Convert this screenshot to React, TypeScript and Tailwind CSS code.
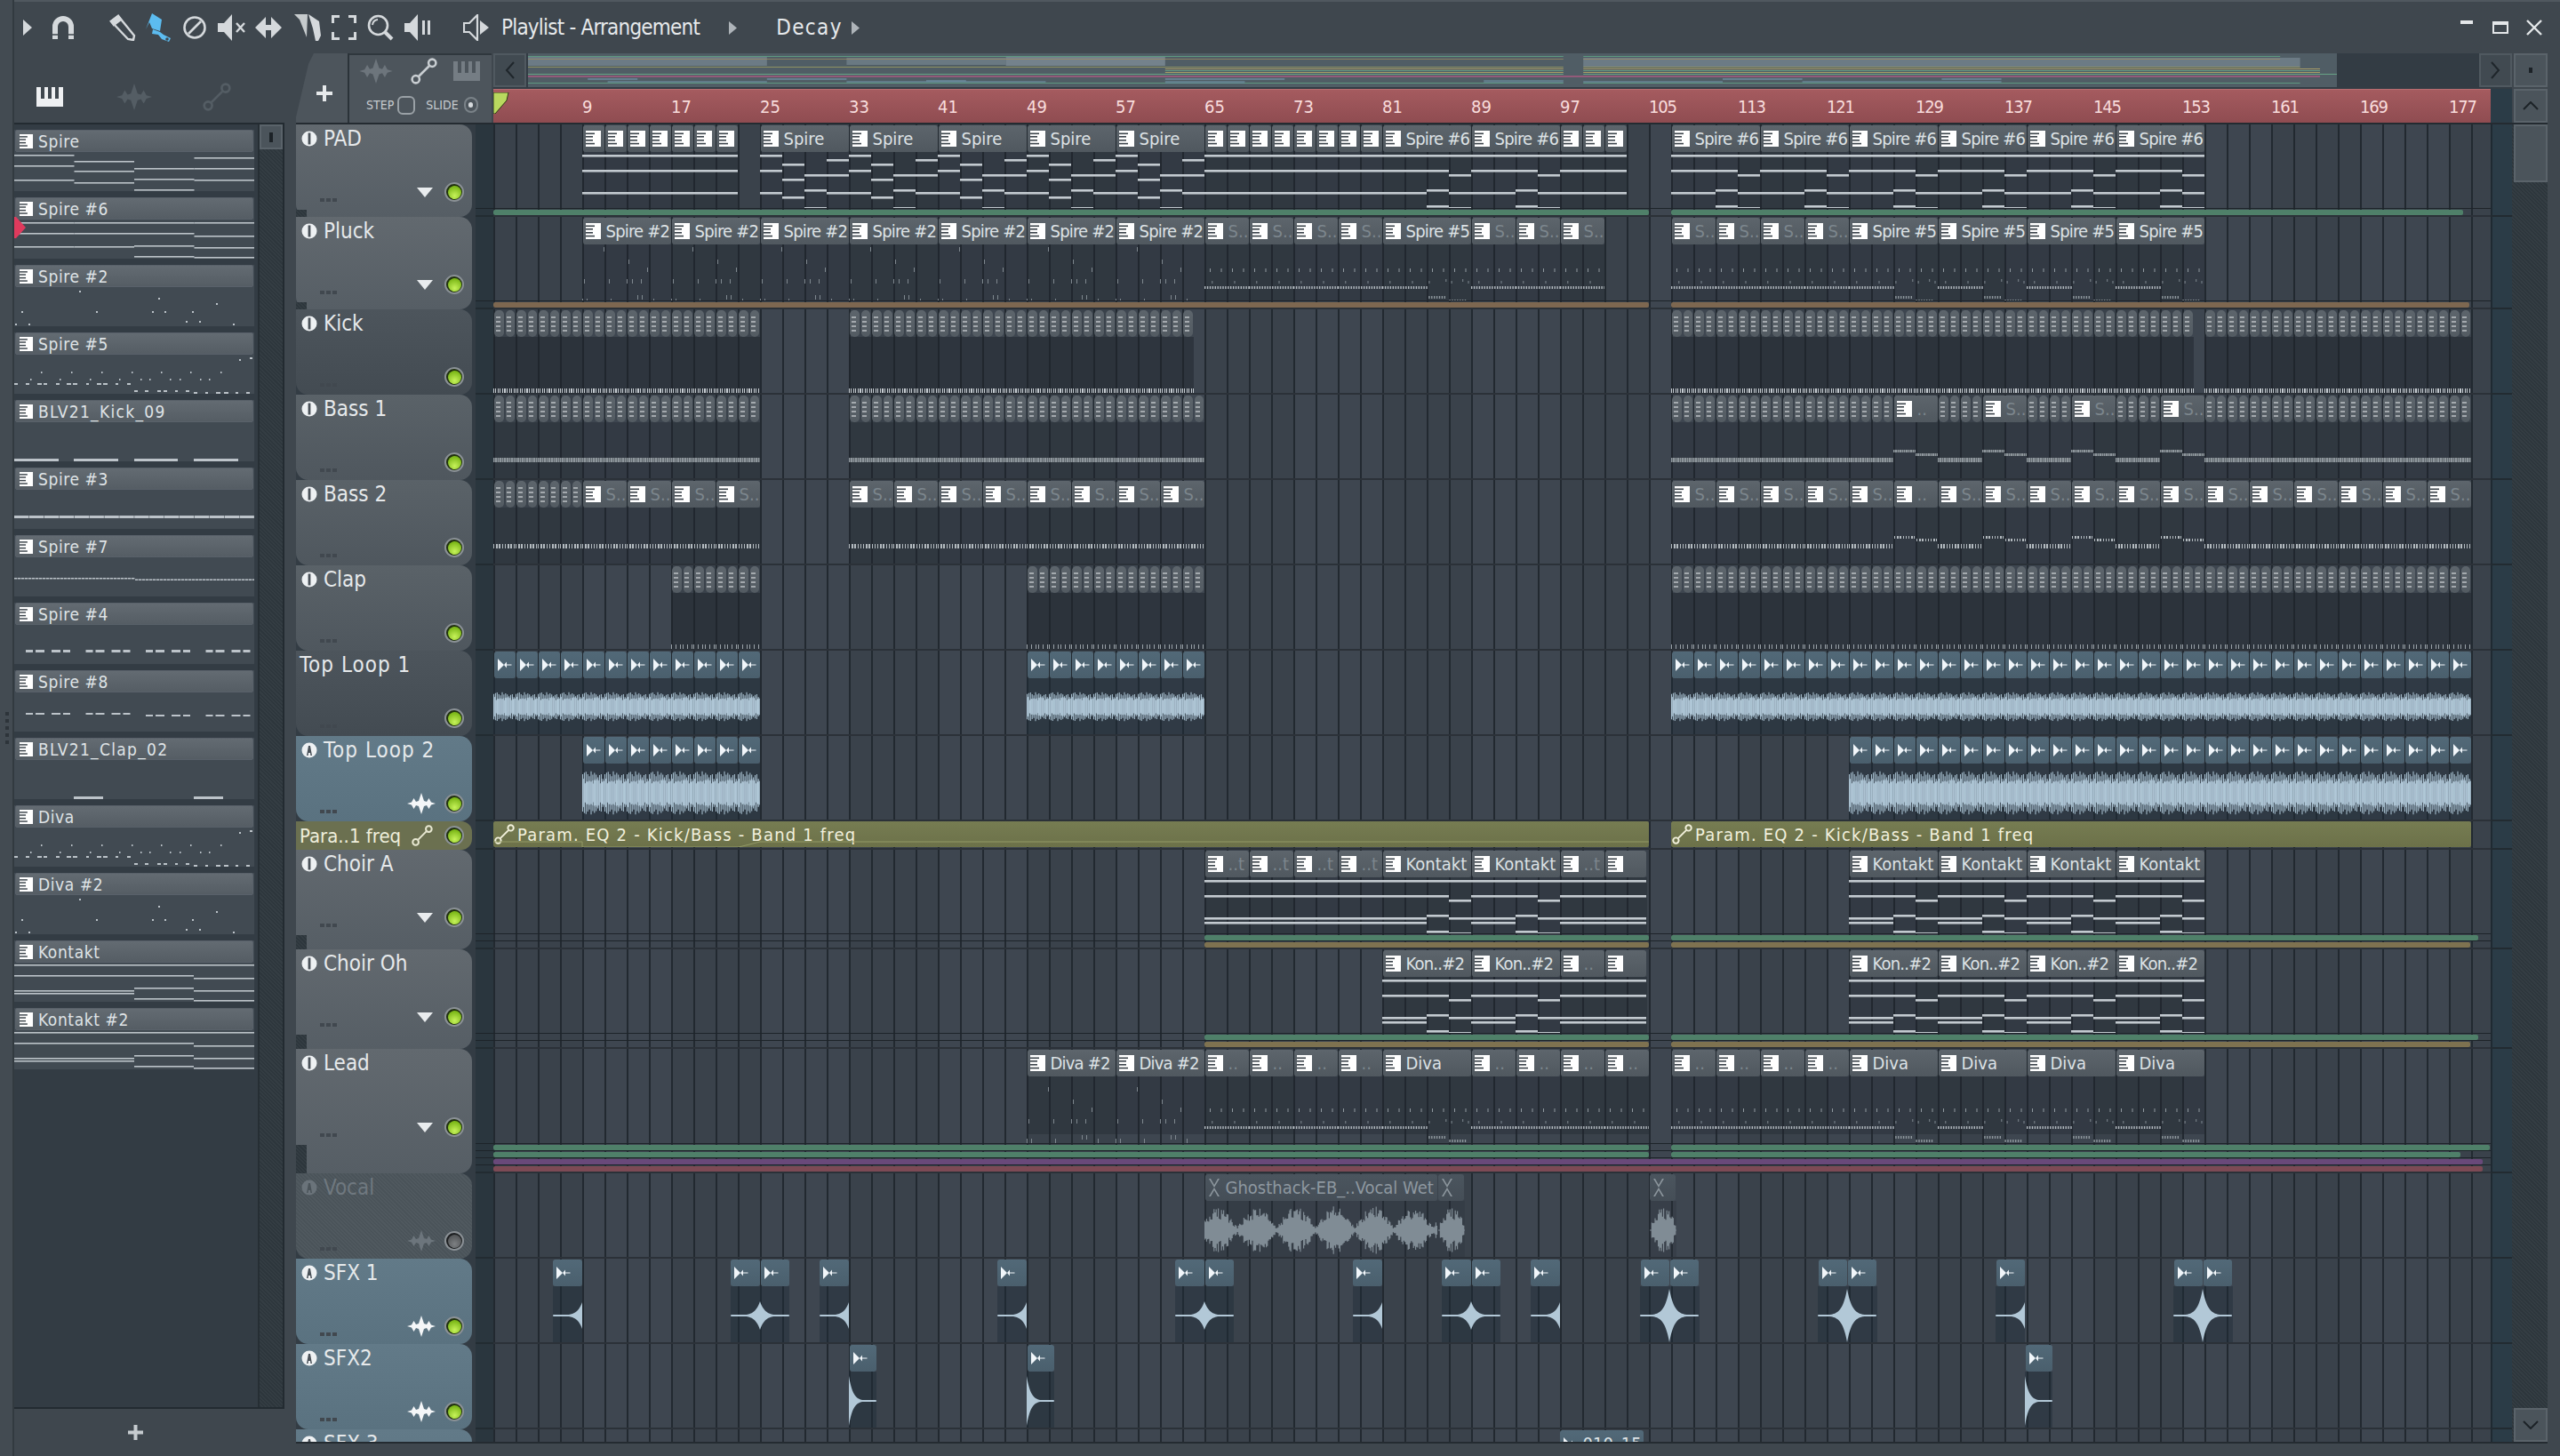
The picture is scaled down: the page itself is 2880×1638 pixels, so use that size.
import type { ReactNode } from 'react';

// 1 bar = 12.5px on the playlist canvas
const BAR = 12.5;
const barX = (bar: number) => (bar - 1) * BAR;

type Kind = 'pat' | 'tiny' | 'audio' | 'vocal';
type Clip = { bar: number; bars: number; kind: Kind; label?: string; dim?: boolean; body?: ReactNode };
type Lane = { color: string; spans: [number, number][] };
type Tone = 'gray' | 'dark' | 'mid' | 'blue' | 'vocal';
type Row = {
    name: string;
    h: number;
    tone: Tone;
    icon: 'power' | 'auto' | 'none';
    side?: 'tri' | 'wave' | 'dimwave';
    clips: Clip[];
    lanes?: Lane[];
};

const seq = (from: number, to: number, step: number) => {
    const out: number[] = [];
    for (let b = from; b < to; b += step) out.push(b);
    return out;
};

function rnd(i: number) {
    const s = Math.sin(i * 12.9898) * 43758.5453;
    return s - Math.floor(s);
}

/* ---------- icons ---------- */

function PianoIcon({ dim }: { dim?: boolean }) {
    return (
        <svg width="17" height="18" viewBox="0 0 17 18" className="shrink-0">
            <rect width="17" height="18" fill={dim ? '#aab1b6' : '#ffffff'} />
            <rect y="2.5" width="10" height="1.6" fill="#3c444b" />
            <rect y="6" width="8" height="1.6" fill="#3c444b" />
            <rect y="10" width="8" height="1.6" fill="#3c444b" />
            <rect y="13.8" width="10" height="1.6" fill="#3c444b" />
        </svg>
    );
}

function AudioIcon({ dim }: { dim?: boolean }) {
    return (
        <svg width="17" height="14" viewBox="0 0 17 14" className="shrink-0">
            <path d="M1 0 L8 7 L1 14 Z M8 7 L11 3.5 V10.5 Z M11 6.4 H16.5 V7.6 H11 Z" fill={dim ? '#8b959c' : '#f1f6fa'} />
        </svg>
    );
}

function VocalIcon() {
    return (
        <svg width="14" height="20" viewBox="0 0 14 20" className="shrink-0">
            <path d="M1 0 L7 10 L1 20 H3 L7 13 L11 20 H13 L7 10 L13 0 H11 L7 7 L3 0 Z" fill="#8b959c" />
        </svg>
    );
}

function WaveIcon({ color, w = 32, h = 24 }: { color: string; w?: number; h?: number }) {
    return (
        <svg width={w} height={h} viewBox="0 0 32 24" className="shrink-0">
            <path
                d="M0 12 L5 10.5 L7.5 6 L10 10 L13 9 L16 0 L19 9 L22 10 L24.5 6 L27 10.5 L32 12 L27 13.5 L24.5 18 L22 14 L19 15 L16 24 L13 15 L10 14 L7.5 18 L5 13.5 Z"
                fill={color}
            />
        </svg>
    );
}

function LinkIcon({ color, size = 26 }: { color: string; size?: number }) {
    return (
        <svg width={size} height={size} viewBox="0 0 26 26" fill="none" stroke={color} strokeWidth="2.2" className="shrink-0">
            <circle cx="5" cy="21" r="3.6" />
            <circle cx="21" cy="5" r="3.6" />
            <path d="M8 18 L18 8" />
        </svg>
    );
}

function BigPiano({ color, w = 30, h = 22 }: { color: string; w?: number; h?: number }) {
    return (
        <svg width={w} height={h} viewBox="0 0 30 22" className="shrink-0">
            <path d="M0 0 H5 V13 H9 V0 H13 V13 H17 V0 H21 V13 H25 V0 H30 V22 H0 Z" fill={color} />
        </svg>
    );
}

function Led({ off }: { off?: boolean }) {
    return (
        <div className={`w-[22px] h-[22px] shrink-0 rounded-full border-2 border-[#8b9196] flex items-center justify-center ${off ? 'bg-[#1d1f21]' : 'bg-[#20300f]'}`}>
            <div
                className={`w-[15px] h-[15px] rounded-full ${
                    off
                        ? 'bg-[radial-gradient(circle_at_50%_70%,#7d8083,#47494b)]'
                        : 'bg-[radial-gradient(circle_at_50%_75%,#c6f25a,#7cb818_75%)]'
                }`}
            />
        </div>
    );
}

function TrackMark({ kind, dim }: { kind: 'power' | 'auto'; dim?: boolean }) {
    const fill = dim ? '#6a737a' : '#eef1f3';
    const ink = dim ? '#4a5359' : '#4a5259';
    return (
        <svg width="18" height="18" viewBox="0 0 18 18" className="shrink-0">
            <circle cx="9" cy="9" r="8.5" fill={fill} />
            {kind === 'power' ? (
                <rect x="7.6" y="2.5" width="2.8" height="13" fill={ink} />
            ) : (
                <path d="M6 15 L8 4 H10 L12 15 H10.4 L10 12 H8 L7.6 15 Z" fill={ink} />
            )}
        </svg>
    );
}

function ToolIcons() {
    const ink = '#d5d9dc';
    return (
        <>
            <svg width="12" height="18" viewBox="0 0 12 18" className="ml-[9px]"><path d="M1 0 L11 9 L1 18 Z" fill={ink} /></svg>
            <svg width="28" height="28" viewBox="0 0 28 28" className="ml-[20px]" fill="none">
                <path d="M5 27 V13 a9 9 0 0 1 18 0 V27" stroke={ink} strokeWidth="6" />
                <path d="M2 22 H8 M20 22 H26" stroke="#3f474e" strokeWidth="1.5" />
            </svg>
            <svg width="30" height="30" viewBox="0 0 30 30" className="ml-[38px]" fill="none" stroke={ink} strokeWidth="2.4">
                <path d="M2 8 L10 2 L28 24 L27 29 L21 28 Z" />
                <path d="M2 8 L10 2 L13 6 L5 12 Z" fill={ink} />
            </svg>
            <svg width="32" height="32" viewBox="0 0 32 32" className="ml-[9px]">
                <path d="M9 0 L20 7 L18 20 L9 17 L6 10 L2 18 Z" fill="#5cbcf0" />
                <path d="M10 18 L18 21 L22 24 L30 28 L28 32 L20 29 L16 24 L9 23 Z" fill="#5cbcf0" />
                <circle cx="26" cy="29" r="1.8" fill="#3f474e" />
            </svg>
            <svg width="28" height="28" viewBox="0 0 28 28" className="ml-[11px]" fill="none" stroke={ink} strokeWidth="2.6">
                <circle cx="14" cy="14" r="11.5" />
                <path d="M7 21 L21 7" />
            </svg>
            <svg width="32" height="30" viewBox="0 0 32 30" className="ml-[12px]">
                <path d="M0 10 H7 L16 0 V30 L7 20 H0 Z" fill={ink} />
                <path d="M21 10 L30 20 M30 10 L21 20" stroke={ink} strokeWidth="2.4" />
            </svg>
            <svg width="30" height="28" viewBox="0 0 30 28" className="ml-[10px]">
                <path d="M0 14 L12 2 V26 Z M18 2 L30 14 L18 26 Z" fill={ink} />
                <path d="M12 11 H18 V17 H12 Z" fill={ink} />
            </svg>
            <svg width="30" height="30" viewBox="0 0 30 30" className="ml-[14px]">
                <path d="M0 0 H15 L14 26 L6 6 Z" fill={ink} opacity="0.9" />
                <path d="M16 0 L28 8 L30 24 L27 30 L24 30 L21 16 Z" fill={ink} />
            </svg>
            <svg width="28" height="28" viewBox="0 0 28 28" className="ml-[12px]" fill="none" stroke={ink} strokeWidth="3">
                <path d="M1.5 9 V1.5 H9 M19 1.5 H26.5 V9 M26.5 19 V26.5 H19 M9 26.5 H1.5 V19" />
            </svg>
            <svg width="30" height="30" viewBox="0 0 30 30" className="ml-[12px]" fill="none" stroke={ink} strokeWidth="2.6">
                <circle cx="12.5" cy="12.5" r="10.5" />
                <path d="M20 20 L28 28" strokeWidth="4" />
                <path d="M6 12 a7 7 0 0 1 6 -6" strokeWidth="2" />
            </svg>
            <svg width="30" height="30" viewBox="0 0 30 30" className="ml-[12px]">
                <path d="M0 10 H6 L15 0 V30 L6 20 H0 Z" fill={ink} />
                <rect x="20" y="7" width="3" height="16" fill={ink} />
                <rect x="26" y="7" width="3" height="16" fill={ink} />
            </svg>
            <svg width="30" height="30" viewBox="0 0 30 30" className="ml-[36px]" fill="none" stroke={ink} strokeWidth="2.2">
                <path d="M1 10 H7 L16 1 V29 L7 20 H1 Z" />
                <path d="M19 7 L29 15 L19 23 Z" fill={ink} stroke="none" />
            </svg>
        </>
    );
}

/* ---------- clip bodies ---------- */

const PAD = [[34, 51, 76]];
const SPIRE = [[34, 51, 76], [44, 61, 81], [56, 73, 93], [39, 56, 76]];
const SPIRE6 = [[34, 51, 76], [34, 51, 76], [34, 51, 73, 91], [34, 56, 76, 93]];
const KON = [[34, 51, 76, 81], [34, 51, 76, 81], [34, 51, 73, 91], [34, 56, 76, 93]];
const KON_S = [[34, 51, 76, 81], [34, 51, 76, 81]];

function Notes({ segs, w }: { segs: number[][]; w: number }) {
    return (
        <svg width={w} height="68" className="block">
            {segs.flatMap((ys, i) =>
                ys.map((y) => <rect key={`${i}-${y}`} x={i * 25} y={y - 31} width="25" height="2.6" fill="#c3cad0" />),
            )}
        </svg>
    );
}

const SPIRE2_TICKS = [
    [24, 34], [52, 48], [73, 57], [2, 70], [30, 70], [50, 70], [56, 70], [66, 70], [62, 88], [67, 88], [0, 92], [5, 92], [32, 92], [80, 92],
];

function Ticks({ w, pts, off = 0 }: { w: number; pts: number[][]; off?: number }) {
    return (
        <svg width={w} height="80" className="block">
            {pts.map(([x, y], i) => (
                <rect key={i} x={x} y={y - 31 + off} width="1" height="5" fill="#7f888f" />
            ))}
        </svg>
    );
}

// the busy Spire #5 / Diva figure: a dotted run that steps down in the last half bar
function Busy({ w, off = 0, drop }: { w: number; off?: number; drop?: boolean }) {
    const rects: ReactNode[] = [];
    for (let x = 6; x < w; x += 12.5) rects.push(<rect key={`a${x}`} x={x} y={27 + off} width="1" height="4" fill="#8f989e" />);
    for (let x = 2; x < w; x += 6.3) {
        if (rnd(x) > 0.4) rects.push(<rect key={`b${x}`} x={x} y={39 + off + (rnd(x + 1) > 0.5 ? 2 : 0)} width="1" height="3" fill="#7f888f" />);
    }
    for (let x = 0; x < w; x += 2.9) {
        const seg = Math.floor(x / 25);
        const low = drop && seg >= 2;
        if (low && x % 25 > 20) continue;
        rects.push(<rect key={`c${x}`} x={x} y={(low ? (seg === 2 ? 58 : 62) : 47) + off} width="1.4" height="3" fill={low ? '#8f989e' : '#b3bac0'} />);
    }
    return <svg width={w} height="80" className="block">{rects}</svg>;
}

function Wave({ w, amp, core, cy }: { w: number; amp: number; core: number; cy: number }) {
    let tall = '';
    let fine = '';
    for (let x = 0.5; x < w; x += 1.9) {
        const fall = 1 - ((x % 25) / 25) * 0.25;
        const a = (core + (amp - core) * (0.5 + 0.5 * rnd(x + 3))) * fall;
        tall += `M${x} ${-a} V${a}`;
    }
    for (let x = 0; x < w; x += 0.9) {
        const a = core * (0.75 + 0.5 * rnd(x + 17));
        fine += `M${x} ${-a} V${a}`;
    }
    return (
        <svg width={w} height="66" className="block">
            <g transform={`translate(0 ${cy})`} fill="none">
                <path d={tall} stroke="#a4bccc" strokeWidth="1.1" />
                <path d={fine} stroke="#b0c7d7" strokeWidth="1" />
            </g>
        </svg>
    );
}

function VocalWave({ w }: { w: number }) {
    let d = '';
    for (let x = 0; x < w; x += 1.2) {
        const env = w < 40
            ? Math.sin(Math.min(x / w, 1) * Math.PI) ** 0.6 * (x < 2 ? 0 : 1)
            : Math.abs(Math.sin(x / 14 + 0.5)) ** 1.1 * 0.85 + 0.15;
        const a = 27 * env * (0.45 + 0.55 * rnd(x + 9));
        d += `M${x} ${33 - a} V${33 + a}`;
    }
    return (
        <svg width={w} height="66" className="block">
            <path d={d} stroke="#808c95" strokeWidth="1.2" />
            <path d={`M0 33 H${w}`} stroke="#808c95" />
        </svg>
    );
}

function Sfx({ w, dir, amp, sharp }: { w: number; dir: 'in' | 'out'; amp: number; sharp?: boolean }) {
    const top: string[] = [];
    const bot: string[] = [];
    for (let i = 0; i <= w; i += 1) {
        const d = dir === 'out' ? i : w - i;
        const a = Math.max(amp * Math.exp(-d / (sharp ? 4.5 : 5.5)), d < w ? 0.9 : 0.5);
        top.push(`${i},${33 - a}`);
        bot.unshift(`${i},${33 + a}`);
    }
    return (
        <svg width={w} height="66" className="block">
            <polygon points={[...top, ...bot].join(' ')} fill="#b2c8d7" />
        </svg>
    );
}

/* ---------- clips ---------- */

function ClipBox({ clip }: { clip: Clip }) {
    const w = clip.bars * BAR;
    const tone =
        clip.kind === 'audio'
            ? 'bg-[linear-gradient(#526978,#4a5f6d)]'
            : clip.kind === 'vocal'
              ? 'bg-[linear-gradient(#4b555e,#454e57)]'
              : clip.kind === 'tiny'
                ? 'bg-[linear-gradient(#5d656c,#535b62)]'
                : 'bg-[linear-gradient(#5d656c,#50585f)]';
    const bodyTone =
        clip.kind === 'audio' ? 'bg-[#1f2d37]/45' : clip.kind === 'vocal' ? 'bg-[#2a333c]/30' : 'bg-[#1f262d]/35';
    return (
        <div className="absolute top-0 bottom-0 overflow-hidden" style={{ left: barX(clip.bar), width: w }}>
            <div
                className={`h-[30px] mt-[1px] flex items-center overflow-hidden whitespace-nowrap ${tone} ${
                    clip.kind === 'tiny' ? 'mx-[1px] rounded-[5px]' : 'mx-[0.5px] rounded-[3px]'
                }`}
            >
                {clip.kind === 'tiny' ? (
                    <div className="w-full flex flex-col gap-[3px] px-[1.5px] opacity-60">
                        {[0, 1, 2, 3].map((i) => (
                            <div key={i} className="h-[2px] bg-[linear-gradient(90deg,#d6dadd_65%,transparent_65%)]" />
                        ))}
                    </div>
                ) : (
                    <>
                        <div className="ml-[3px] shrink-0">
                            {clip.kind === 'pat' ? <PianoIcon /> : clip.kind === 'audio' ? <AudioIcon /> : <VocalIcon />}
                        </div>
                        {clip.label && (
                            <span
                                className={`ml-[6px] text-[20px] leading-[28px] ${clip.label.includes('#') ? 'tracking-[-0.8px]' : ''} ${
                                    clip.dim ? 'text-[#7c868d]' : clip.kind === 'vocal' ? 'text-[#8e98a0]' : 'text-[#dde2e5]'
                                }`}
                            >
                                {clip.label}
                            </span>
                        )}
                    </>
                )}
            </div>
            <div className={`relative h-[65px] ${bodyTone}`}>{clip.body}</div>
        </div>
    );
}

const pat = (bar: number, bars: number, label: string | undefined, body: ReactNode, dim?: boolean): Clip => ({
    bar, bars, kind: 'pat', label, body, dim,
});

const padSmall = (bar: number) => pat(bar, 2, undefined, <Notes segs={PAD} w={25} />);

const STRIPE_KICK = 'bg-[repeating-linear-gradient(90deg,#c6ccd1_0,#c6ccd1_1px,transparent_1px,transparent_2.4px)]';
const STRIPE_CLAP = 'bg-[repeating-linear-gradient(90deg,#9aa2a8_0,#9aa2a8_1px,transparent_1px,transparent_5px)]';
const STRIPE_BASS = 'bg-[repeating-linear-gradient(90deg,#8e969c_0,#8e969c_1.4px,#5f676d_1.4px,#5f676d_2.4px)]';
const STRIPE_B2 = 'bg-[repeating-linear-gradient(90deg,#b4bbc0_0,#b4bbc0_1.4px,transparent_1.4px,transparent_3.2px)]';

function KickBody() {
    return (
        <div className="absolute inset-0 bg-[#1c2228]/20">
            <div className={`absolute left-0 right-0 top-[58px] h-[5px] ${STRIPE_KICK}`} />
        </div>
    );
}

function ClapBody() {
    return (
        <div className="absolute inset-0 bg-[#1c2228]/20">
            <div className={`absolute left-0 right-0 top-[58px] h-[5px] ${STRIPE_CLAP}`} />
        </div>
    );
}

const tinyRun = (from: number, to: number, body: ReactNode): Clip[] =>
    seq(from, to, 1).map((b) => ({ bar: b, bars: Math.min(1, to - b), kind: 'tiny' as Kind, body }));

const bassLine = <div className={`absolute left-0 right-0 top-[40px] h-[5px] ${STRIPE_BASS}`} />;
const b2Line = <div className={`absolute left-0 right-0 top-[41px] h-[5px] ${STRIPE_B2}`} />;
const bassUp = (
    <>
        <div className={`absolute left-0 w-[25px] top-[31px] h-[3px] ${STRIPE_BASS}`} />
        <div className={`absolute left-[25px] w-[25px] top-[35px] h-[3px] ${STRIPE_BASS}`} />
    </>
);
const b2Up = (
    <>
        <div className={`absolute left-[1px] w-[23px] top-[32px] h-[3px] ${STRIPE_B2}`} />
        <div className={`absolute left-[26px] w-[23px] top-[35px] h-[3px] ${STRIPE_B2}`} />
    </>
);

const padClips: Clip[] = [
    ...seq(9, 23, 2).map(padSmall),
    ...seq(25, 65, 8).map((b) => pat(b, 8, 'Spire', <Notes segs={SPIRE} w={100} />)),
    ...seq(65, 81, 2).map(padSmall),
    ...[81, 89].map((b) => pat(b, 8, 'Spire #6', <Notes segs={SPIRE6} w={100} />)),
    ...seq(97, 103, 2).map(padSmall),
    ...seq(107, 155, 8).map((b) => pat(b, 8, 'Spire #6', <Notes segs={SPIRE6} w={100} />)),
];

const pluckClips: Clip[] = [
    ...seq(9, 65, 8).map((b) => pat(b, 8, 'Spire #2', <Ticks w={100} pts={SPIRE2_TICKS} />)),
    ...seq(65, 81, 4).map((b) => pat(b, 4, 'S..', <Busy w={50} />, true)),
    pat(81, 8, 'Spire #5', <Busy w={100} drop />),
    ...seq(89, 101, 4).map((b) => pat(b, 4, 'S..', <Busy w={50} />, true)),
    ...seq(107, 123, 4).map((b) => pat(b, 4, 'S..', <Busy w={50} />, true)),
    ...seq(123, 155, 8).map((b) => pat(b, 8, 'Spire #5', <Busy w={100} drop />)),
];

const kickBody = <KickBody />;
const kickClips: Clip[] = [
    ...tinyRun(1, 25, kickBody),
    ...tinyRun(33, 49, kickBody),
    ...tinyRun(49, 64, kickBody),
    ...tinyRun(107, 139, kickBody),
    ...tinyRun(139, 154, kickBody),
    ...tinyRun(155, 167, kickBody),
    ...tinyRun(167, 179, kickBody),
];

const bass1Clips: Clip[] = [
    ...tinyRun(1, 25, bassLine),
    ...tinyRun(33, 65, bassLine),
    ...tinyRun(107, 127, bassLine),
    pat(127, 4, '..', bassUp, true),
    ...tinyRun(131, 135, bassLine),
    pat(135, 4, 'S..', bassUp, true),
    ...tinyRun(139, 143, bassLine),
    pat(143, 4, 'S..', bassUp, true),
    ...tinyRun(147, 151, bassLine),
    pat(151, 4, 'S..', bassUp, true),
    ...tinyRun(155, 179, bassLine),
];

const bass2Clips: Clip[] = [
    ...tinyRun(1, 9, b2Line),
    ...seq(9, 25, 4).map((b) => pat(b, 4, 'S..', b2Line, true)),
    ...seq(33, 65, 4).map((b) => pat(b, 4, 'S..', b2Line, true)),
    ...seq(107, 179, 4).map((b) =>
        pat(b, 4, b === 127 ? '..' : 'S..', [127, 135, 143, 151].includes(b) ? b2Up : b2Line, true),
    ),
];

const clapBody = <ClapBody />;
const clapClips: Clip[] = [...tinyRun(17, 25, clapBody), ...tinyRun(49, 65, clapBody), ...tinyRun(107, 179, clapBody)];

const audioRun = (from: number, to: number, amp: number, core: number, cy: number): Clip[] =>
    seq(from, to, 2).map((b) => ({
        bar: b,
        bars: 2,
        kind: 'audio' as Kind,
        body: <Wave w={25} amp={amp} core={core} cy={cy} />,
    }));

const kontaktRow = (small: boolean, label: string, dimLabel: string): Clip[] => [
    ...(small ? seq(65, 81, 4).map((b) => pat(b, 4, dimLabel, <Notes segs={KON_S} w={50} />, true)) : []),
    ...[81, 89].map((b) => pat(b, 8, label, <Notes segs={KON} w={100} />)),
    pat(97, 4, dimLabel, <Notes segs={KON_S} w={50} />, true),
    pat(101, 3.8, undefined, <Notes segs={KON_S} w={47} />),
    ...seq(123, 155, 8).map((b) => pat(b, 8, label, <Notes segs={KON} w={100} />)),
];

const leadClips: Clip[] = [
    ...[49, 57].map((b) => pat(b, 8, 'Diva #2', <Ticks w={100} pts={SPIRE2_TICKS} off={9} />)),
    ...seq(65, 81, 4).map((b) => pat(b, 4, '..', <Busy w={50} off={9} />, true)),
    pat(81, 8, 'Diva', <Busy w={100} off={9} drop />),
    ...seq(89, 105, 4).map((b) => pat(b, 4, '..', <Busy w={50} off={9} />, true)),
    ...seq(107, 123, 4).map((b) => pat(b, 4, '..', <Busy w={50} off={9} />, true)),
    ...seq(123, 155, 8).map((b) => pat(b, 8, 'Diva', <Busy w={100} off={9} drop />)),
];

const atPx = (px: number) => (px - 555) / BAR + 1;

const sfxClip = (px: number, dir: 'in' | 'out', amp: number): Clip => ({
    bar: atPx(px),
    bars: 33.4 / BAR,
    kind: 'audio',
    body: <Sfx w={33} dir={dir} amp={amp} />,
});

const sfx1Clips: Clip[] = [
    sfxClip(621.7, 'in', 15), sfxClip(821.7, 'in', 16), sfxClip(855, 'out', 16), sfxClip(921.7, 'in', 15),
    sfxClip(1121.7, 'in', 15), sfxClip(1321.7, 'in', 16), sfxClip(1355, 'out', 16), sfxClip(1521.7, 'in', 15),
    sfxClip(1621.7, 'in', 16), sfxClip(1655, 'out', 16), sfxClip(1721.7, 'in', 15), sfxClip(1845, 'in', 30),
    sfxClip(1878.4, 'out', 30), sfxClip(2045, 'in', 30), sfxClip(2078.4, 'out', 30), sfxClip(2245, 'in', 15),
    sfxClip(2445, 'in', 30), sfxClip(2478.4, 'out', 30),
];

const sfx2Clips: Clip[] = [955, 1155, 2278].map((px) => ({
    bar: atPx(px),
    bars: 31 / BAR,
    kind: 'audio' as Kind,
    body: <Sfx w={31} dir="out" amp={28} sharp />,
}));

const GREEN = '#4f8069';
const BROWN = '#7d6750';
const KHAKI = '#7e7250';
const PURPLE = '#69497a';
const RED = '#7d4a55';

const ROWS: Row[] = [
    { name: 'PAD', h: 104, tone: 'gray', icon: 'power', side: 'tri', clips: padClips, lanes: [{ color: GREEN, spans: [[1, 105], [107, 178.3]] }] },
    { name: 'Pluck', h: 104, tone: 'gray', icon: 'power', side: 'tri', clips: pluckClips, lanes: [{ color: BROWN, spans: [[1, 105], [107, 178.8]] }] },
    { name: 'Kick', h: 96, tone: 'dark', icon: 'power', clips: kickClips },
    { name: 'Bass 1', h: 96, tone: 'mid', icon: 'power', clips: bass1Clips },
    { name: 'Bass 2', h: 96, tone: 'mid', icon: 'power', clips: bass2Clips },
    { name: 'Clap', h: 96, tone: 'mid', icon: 'power', clips: clapClips },
    {
        name: 'Top Loop 1', h: 96, tone: 'dark', icon: 'none',
        clips: [...audioRun(1, 25, 18, 9, 32), ...audioRun(49, 65, 18, 9, 32), ...audioRun(107, 179, 18, 9, 32)],
    },
    {
        name: 'Top Loop 2', h: 96, tone: 'blue', icon: 'auto', side: 'wave',
        clips: [...audioRun(9, 25, 27, 13, 33), ...audioRun(123, 179, 27, 13, 33)],
    },
    { name: 'Para..1 freq', h: 32, tone: 'gray', icon: 'none', clips: [] },
    {
        name: 'Choir A', h: 112, tone: 'gray', icon: 'power', side: 'tri', clips: kontaktRow(true, 'Kontakt', '..t'),
        lanes: [{ color: GREEN, spans: [[65, 105], [107, 179.6]] }, { color: KHAKI, spans: [[65, 105], [107, 178.9]] }],
    },
    {
        name: 'Choir Oh', h: 112, tone: 'gray', icon: 'power', side: 'tri', clips: kontaktRow(false, 'Kon..#2', '..'),
        lanes: [{ color: GREEN, spans: [[65, 105], [107, 179.6]] }, { color: KHAKI, spans: [[65, 105], [107, 178.9]] }],
    },
    {
        name: 'Lead', h: 140, tone: 'gray', icon: 'power', side: 'tri', clips: leadClips,
        lanes: [
            { color: GREEN, spans: [[1, 105], [107, 180.7]] },
            { color: GREEN, spans: [[1, 105], [107, 178]] },
            { color: PURPLE, spans: [[1, 180]] },
            { color: RED, spans: [[1, 180]] },
        ],
    },
    {
        name: 'Vocal', h: 96, tone: 'vocal', icon: 'auto', side: 'dimwave',
        clips: [
            { bar: 65, bars: 21, kind: 'vocal', label: 'Ghosthack-EB_..Vocal Wet', body: <VocalWave w={262} /> },
            { bar: 86, bars: 2.4, kind: 'vocal', body: <VocalWave w={30} /> },
            { bar: 105.05, bars: 2.4, kind: 'vocal', body: <VocalWave w={30} /> },
        ],
    },
    { name: 'SFX 1', h: 96, tone: 'blue', icon: 'auto', side: 'wave', clips: sfx1Clips },
    { name: 'SFX2', h: 96, tone: 'blue', icon: 'auto', side: 'wave', clips: sfx2Clips },
    {
        name: 'SFX 3', h: 96, tone: 'blue', icon: 'auto', side: 'wave',
        clips: [{ bar: atPx(1754), bars: 95 / BAR, kind: 'audio', label: '010_15' }],
    },
];

/* ---------- playlist rows ---------- */

const GRID =
    '[background-image:repeating-linear-gradient(90deg,#222930_0,#222930_2px,transparent_2px,transparent_25px),repeating-linear-gradient(90deg,#3a424b_0,#3a424b_100px,#3e4650_100px,#3e4650_200px)]';
const GRID_END =
    '[background-image:repeating-linear-gradient(90deg,#1f2a32_0,#1f2a32_2px,#2b3c47_2px,#2b3c47_25px)]';
const HATCH =
    '[background-image:repeating-linear-gradient(45deg,#2d363c_0,#2d363c_1.5px,#343d43_1.5px,#343d43_3px)]';

const PANEL: Record<Tone, string> = {
    gray: 'bg-[linear-gradient(#62696f,#565e65)]',
    mid: 'bg-[linear-gradient(#5a6268,#4f575e)]',
    dark: 'bg-[linear-gradient(#4d555c,#434b52)]',
    blue: 'bg-[linear-gradient(#627a88,#5a7280)]',
    vocal: 'bg-[repeating-linear-gradient(45deg,#4a5359_0,#4a5359_1.5px,#50595f_1.5px,#50595f_3px)]',
};

function TrackPanel({ row }: { row: Row }) {
    const laneH = (row.lanes?.length ?? 0) * 8;
    const dim = row.tone === 'vocal';
    return (
        <div className={`relative w-[198px] h-full flex flex-col rounded-tr-[14px] rounded-br-[14px] rounded-bl-[14px] ${PANEL[row.tone]}`}>
            <div className="h-[32px] flex items-center">
                {row.icon === 'none' ? (
                    <div className="w-[4px]" />
                ) : (
                    <div className="ml-[6px] mr-[7px]">
                        <TrackMark kind={row.icon} dim={dim} />
                    </div>
                )}
                <span className={`text-[24px] ${row.name.startsWith('Top') ? 'tracking-[1px]' : ''} ${dim ? 'text-[#6f787f]' : 'text-[#e6e9eb]'}`}>
                    {row.name}
                </span>
            </div>
            <div className="flex-1" />
            <div className="h-[26px] flex items-center mb-[7px]">
                <div className="ml-[27px] mt-[18px] flex gap-[2px]">
                    <div className="w-[5px] h-[4px] bg-[#41484f]" />
                    <div className="w-[5px] h-[4px] bg-[#41484f]" />
                    <div className="w-[5px] h-[4px] bg-[#41484f]" />
                </div>
                <div className="ml-auto flex items-center">
                    {row.side === 'tri' && (
                        <svg width="18" height="11" viewBox="0 0 18 11" className="mr-[13px]"><path d="M0 0 H18 L9 11 Z" fill="#e9ecee" /></svg>
                    )}
                    {row.side === 'wave' && <div className="mr-[10px]"><WaveIcon color="#f4f6f8" /></div>}
                    {row.side === 'dimwave' && <div className="mr-[10px]"><WaveIcon color="#6c757c" /></div>}
                    <div className="mr-[9px]"><Led off={dim} /></div>
                </div>
            </div>
            <div style={{ height: laneH }} />
            {laneH > 0 && <div className={`absolute left-0 bottom-0 w-[12px] ${HATCH}`} style={{ height: laneH }} />}
        </div>
    );
}

function ParaPanel() {
    return (
        <div className="w-[198px] h-full flex items-center rounded-r-[12px] bg-[#6b7050]">
            <span className="ml-[4px] text-[22px] text-[#eeeedb] whitespace-nowrap">Para..1 freq</span>
            <div className="ml-auto mr-[13px]"><LinkIcon color="#e8e8d2" size={24} /></div>
            <div className="mr-[9px]"><Led /></div>
        </div>
    );
}

function ParaLane() {
    const spans: [number, number][] = [[1, 105], [107, 179]];
    return (
        <>
            {spans.map(([a, b]) => (
                <div
                    key={a}
                    className="absolute top-0 bottom-[1px] rounded-[2px] bg-[linear-gradient(#767c52,#6c7149)] flex items-center overflow-hidden whitespace-nowrap"
                    style={{ left: barX(a), width: (b - a) * BAR }}
                >
                    <div className="ml-[1px]"><LinkIcon color="#f2f1dc" size={23} /></div>
                    <span className="ml-[3px] text-[20px] tracking-[1.2px] text-[#f1f0dd]">Param. EQ 2 - Kick/Bass - Band 1 freq</span>
                    {a === 1 && (
                        <svg width={(b - a) * BAR} height="32" className="absolute left-0 top-0" fill="none" stroke="#939a67" strokeWidth="1">
                            <path d="M0 23 H100 V29 H276 L300 23 H1300" />
                        </svg>
                    )}
                </div>
            ))}
        </>
    );
}

function LaneRow({ lane }: { lane: Lane }) {
    return (
        <div className="relative h-[8px] border-t border-[#1d2329]">
            {lane.spans.map(([a, b]) => (
                <div
                    key={a}
                    className="absolute top-[0.5px] h-[6.5px] rounded-[2px]"
                    style={{ left: barX(a), width: (b - a) * BAR, backgroundColor: lane.color }}
                />
            ))}
        </div>
    );
}

function PlaylistRow({ row }: { row: Row }) {
    const lanes = row.lanes ?? [];
    const isPara = row.name.startsWith('Para');
    return (
        <div className="flex shrink-0" style={{ height: row.h }}>
            <div className="w-[198px] h-full shrink-0">{isPara ? <ParaPanel /> : <TrackPanel row={row} />}</div>
            <div className="w-[4px] shrink-0" />
            <div className="w-[20px] shrink-0 flex flex-col bg-[#2a363e] border-b-2 border-[#222b31]">
                <div className="flex-1" />
                {lanes.map((_, i) => (
                    <div key={i} className="h-[8px] border-t border-[#1d2329]" />
                ))}
            </div>
            <div className={`w-[2247px] shrink-0 flex flex-col border-b-2 border-[#2b3138] ${GRID}`}>
                <div className="relative flex-1 overflow-hidden">
                    {isPara ? <ParaLane /> : row.clips.map((c, i) => <ClipBox key={i} clip={c} />)}
                </div>
                {lanes.map((l, i) => (
                    <LaneRow key={i} lane={l} />
                ))}
            </div>
            <div className={`w-[24px] shrink-0 border-b-2 border-[#222b31] ${GRID_END}`} />
        </div>
    );
}

/* ---------- header bits ---------- */

const RULER_BARS = seq(9, 178, 8);

function Ruler() {
    return (
        <div className="relative h-[38px] w-[2247px] border-t border-[#b96e71] bg-[linear-gradient(#a55b5f,#8f4c51)]">
            {RULER_BARS.map((b) => (
                <span
                    key={b}
                    className={`absolute top-[6px] text-[20px] leading-[26px] text-[#f8dcdc] ${b >= 100 ? 'tracking-[-1.2px]' : ''}`}
                    style={{ left: barX(b) }}
                >
                    {b}
                </span>
            ))}
            <svg width="18" height="24" viewBox="0 0 18 24" className="absolute left-0 top-[3px]">
                <path d="M0 0 H17 L15 9 L2 24 H0 Z" fill="#b9d85f" stroke="#2b3a12" strokeWidth="1" />
            </svg>
        </div>
    );
}

const OV_X = (bar: number) => (bar - 1) * 11.2;
const OV: [number, number, number, number, string, number?][] = [
    [1, 25, 4, 10, '#7f8f9b', 0.6], [33, 49, 5, 8, '#7f8f9b', 0.55], [49, 65, 4, 10, '#8796a1', 0.65], [107, 179, 5, 10, '#7f8f9b', 0.6],
    [1, 105, 3, 1, '#62a887', 0.8], [107, 177, 3, 1, '#62a887', 0.8],
    [1, 105, 6, 1, '#a38f63', 0.7], [107, 177, 6, 1, '#a38f63', 0.7],
    [1, 105, 15, 1, '#a0a062', 0.8], [107, 179, 15, 1, '#a0a062', 0.8],
    [65, 105, 17, 1, '#c0ad66', 0.8], [107, 181, 17, 1, '#c0ad66', 0.8],
    [65, 105, 19, 1, '#6db58d', 0.7], [107, 181, 19, 1, '#6db58d', 0.7],
    [65, 105, 21, 1, '#c0ad66', 0.8], [107, 181, 21, 1, '#c0ad66', 0.8],
    [1, 105, 23, 1, '#6db58d', 0.8], [107, 183, 23, 1, '#6db58d', 0.8],
    [1, 181, 25, 2, '#9a5a7c', 0.9],
    [1, 105, 33, 1, '#62a887', 0.8], [107, 179, 33, 1, '#62a887', 0.8],
    [7, 12, 28, 2, '#6d8fa2', 0.7], [25, 33, 28, 2, '#6d8fa2', 0.7], [41, 45, 30, 2, '#6d8fa2', 0.7], [65, 77, 28, 2, '#6d8fa2', 0.7],
    [9, 25, 31, 2, '#6d8fa2', 0.6], [33, 53, 31, 2, '#6d8fa2', 0.6], [65, 73, 31, 3, '#6d8fa2', 0.6], [97, 105, 30, 3, '#6d8fa2', 0.6],
    [121, 129, 28, 2, '#6d8fa2', 0.7], [143, 149, 28, 2, '#6d8fa2', 0.7], [107, 121, 31, 2, '#6d8fa2', 0.6], [129, 149, 31, 2, '#6d8fa2', 0.6],
];

function Overview() {
    return (
        <svg width="2035" height="38" className="block bg-[#505d65]">
            {OV.map(([a, b, y, h, c, o], i) => (
                <rect key={i} x={OV_X(a)} y={y} width={(b - a) * 11.2} height={h} fill={c} opacity={o ?? 1} />
            ))}
        </svg>
    );
}

function ArrowBtn({ dir }: { dir: 'left' | 'right' }) {
    return (
        <div className="w-[37px] h-[38px] flex items-center justify-center bg-[#414a51] border-2 border-[#505960]">
            <svg width="11" height="20" viewBox="0 0 11 20" fill="none" stroke="#1f262b" strokeWidth="2">
                <path d={dir === 'left' ? 'M10 1 L2 10 L10 19' : 'M1 1 L9 10 L1 19'} />
            </svg>
        </div>
    );
}

function SideBtn({ children, h = 38 }: { children?: ReactNode; h?: number }) {
    return (
        <div className="w-[38px] shrink-0 flex items-center justify-center bg-[#4b545b] border-2 border-[#5a636a]" style={{ height: h }}>
            {children}
        </div>
    );
}

function ToolBox() {
    return (
        <div className="w-[222px] h-[78px] shrink-0 flex">
            <div className="w-[58px] h-full pt-[36px] flex justify-center pl-[6px] bg-[#4d555c] [clip-path:polygon(20px_0,100%_0,100%_100%,0_100%,0_92%,14px_12px)]">
                <svg width="18" height="18" viewBox="0 0 18 18"><path d="M7 0 H11 V7 H18 V11 H11 V18 H7 V11 H0 V7 H7 Z" fill="#e6e9eb" /></svg>
            </div>
            <div className="w-[2px] bg-[#2b3339]" />
            <div className="w-[160px] h-full flex flex-col bg-[#4d555c] border-t-2 border-[#2f373d]">
                <div className="h-[36px] flex items-center">
                    <div className="ml-[10px]"><WaveIcon color="#6d757c" w={40} h={28} /></div>
                    <div className="ml-[19px]"><LinkIcon color="#c9ced2" size={30} /></div>
                    <div className="ml-[18px]"><BigPiano color="#757d84" /></div>
                </div>
                <div className="flex-1 flex items-center text-[14px] text-[#c6cbcf]">
                    <span className="ml-[19px]">STEP</span>
                    <div className="ml-[4px] w-[20px] h-[21px] rounded-[6px] border-2 border-[#9aa1a6]" />
                    <span className="ml-[12px]">SLIDE</span>
                    <div className="ml-[6px] w-[16px] h-[18px] rounded-full border-2 border-[#7a8288] flex items-center justify-center">
                        <div className="w-[5px] h-[6px] rounded-full bg-[#d6dadd]" />
                    </div>
                </div>
            </div>
        </div>
    );
}

/* ---------- picker ---------- */

type Pt = [number, number, number, number?]; // x, w, y, h

const dashRun = (y: number, xs: [number, number][], h = 2): Pt[] => xs.map(([a, b]) => [a, b - a, y, h]);
const fourSeg = (seg: number[][], h = 1.6): Pt[] =>
    seg.flatMap((ys, i) => ys.map((y): Pt => [i * 67.5, 67.5, y, h]));

const DIVA_DOTS: Pt[] = [
    ...dashRun(5, [[253, 255]]), ...dashRun(3, [[265, 268]]),
    ...[30, 64, 98, 132, 165, 198, 232].flatMap((x) => dashRun(19, [[x, x + 1.5]])),
    ...[18, 51, 85, 118, 142, 152, 175, 186, 209, 219].flatMap((x) => dashRun(27, [[x, x + 1.5]])),
    ...dashRun(32, [[0, 4], [13, 17], [26, 31], [33, 37], [47, 51], [59, 64], [66, 71], [81, 84], [93, 98], [100, 105], [114, 117], [127, 131]]),
    ...dashRun(40, [[135, 139], [147, 151], [161, 165], [168, 172], [181, 184], [193, 197]]),
    ...dashRun(42, [[202, 206], [215, 218], [227, 232], [236, 241], [249, 252], [261, 265]]),
];
const SPARSE_DOTS: Pt[] = [
    [73, 2, 4], [162, 2, 12], [227, 2, 18], [8, 2, 27], [92, 2, 27], [155, 2, 27], [169, 2, 27], [200, 2, 27], [1, 2, 41], [16, 2, 41], [193, 2, 38], [208, 2, 38], [246, 2, 41],
];
const FOURS = [[13, 21], [24, 34], [42, 52], [55, 63]];
const fours = (y: number, from: number, to: number, h: number): Pt[] =>
    seq(from, to, 1).flatMap((r) => FOURS.map(([a, b]): Pt => [a + r * 67.5, b - a, y, h]));
const KONTAKT_NOTES: Pt[] = [
    [0, 270, 2, 1.6], [0, 135, 14, 1.6], [135, 67, 14, 1.6], [202, 68, 17, 1.6], [0, 135, 31, 1.6], [0, 135, 34, 1.6],
    [135, 67, 28, 1.6], [135, 67, 40, 1.6], [202, 68, 31, 1.6], [202, 68, 42, 1.6],
];

const PICKS: { name: string; notes: Pt[] }[] = [
    { name: 'Spire', notes: fourSeg([[3, 15, 31], [10, 21, 34], [18, 30, 42], [6, 18, 31]]) },
    { name: 'Spire #6', notes: [...fourSeg([[3, 15, 30], [3, 15, 30], [3, 15, 29, 41], [3, 18, 31, 42]])] },
    { name: 'Spire #2', notes: SPARSE_DOTS },
    { name: 'Spire #5', notes: DIVA_DOTS },
    { name: 'BLV21_Kick_09', notes: [[0, 50, 41, 3], [67, 50, 41, 3], [135, 49, 41, 3], [202, 50, 41, 3]] },
    { name: 'Spire #3', notes: seq(0, 16, 1).map((i): Pt => [i * 16.9, 16.4, 29, 3]) },
    { name: 'Spire #7', notes: [...seq(0, 34, 1).map((i): Pt => [i * 4, 3.4, 23, 1.5]), ...seq(34, 68, 1).map((i): Pt => [i * 4, 3.4, 24.5, 1.5])] },
    { name: 'Spire #4', notes: fours(28, 0, 4, 3) },
    { name: 'Spire #8', notes: [...fours(23, 0, 2, 2), ...fours(25, 2, 4, 2)] },
    { name: 'BLV21_Clap_02', notes: [[67, 33, 41, 3], [202, 33, 41, 3]] },
    { name: 'Diva', notes: DIVA_DOTS },
    { name: 'Diva #2', notes: SPARSE_DOTS },
    { name: 'Kontakt', notes: KONTAKT_NOTES },
    { name: 'Kontakt #2', notes: KONTAKT_NOTES },
];

function PickItem({ name, notes, marked }: { name: string; notes: Pt[]; marked?: boolean }) {
    return (
        <div className="relative w-[270px] h-[69px] bg-[#414a52]">
            <div className="h-[25px] mx-[1px] flex items-center rounded-[2px] border border-[#59616a] bg-[linear-gradient(#636b72,#555d64)]">
                <div className="ml-[3px] scale-90"><PianoIcon /></div>
                <span className={`ml-[5px] text-[19px] leading-[24px] text-[#dfe3e6] whitespace-nowrap ${name.startsWith('BLV') ? 'tracking-[1.3px]' : 'tracking-[0.6px]'}`}>
                    {name}
                </span>
            </div>
            <svg width="270" height="44" className="block">
                {notes.map(([x, w, y, h], i) => (
                    <rect key={i} x={x} y={y} width={w} height={h ?? 2} fill="#bcc3c9" />
                ))}
            </svg>
            {marked && (
                <svg width="13" height="24" viewBox="0 0 13 24" className="absolute left-0 top-[22px]">
                    <path d="M0 0 H2 L13 12 L2 24 H0 Z" fill="#df3a5d" />
                </svg>
            )}
        </div>
    );
}

function Picker() {
    return (
        <div className="w-[304px] shrink-0 flex flex-col">
            <div className="h-[78px] flex items-center pt-[20px]">
                <div className="ml-[25px]"><BigPiano color="#eef0f2" /></div>
                <div className="ml-[60px]"><WaveIcon color="#545d64" w={40} h={40} /></div>
                <div className="ml-[57px]"><LinkIcon color="#545d64" size={32} /></div>
            </div>
            <div className="h-[1447px] flex bg-[#333c44] border-t-2 border-b-2 border-r-2 border-[#232b31]">
                <div className="w-[272px] flex flex-col gap-[7px] pt-[6px]">
                    {PICKS.map((p) => (
                        <PickItem key={p.name} name={p.name} notes={p.notes} marked={p.name === 'Spire #6'} />
                    ))}
                </div>
                <div className={`flex-1 ml-[2px] border-l-2 border-[#262e34] ${HATCH}`}>
                    <div className="w-full h-[28px] bg-[#4b545b] border-2 border-[#5a636a] flex items-center justify-center">
                        <div className="w-[4px] h-[11px] bg-[#1c2227]" />
                    </div>
                </div>
            </div>
            <div className="flex-1 flex items-center justify-center pr-[31px]">
                <svg width="17" height="17" viewBox="0 0 17 17"><path d="M6.5 0 H10.5 V6.5 H17 V10.5 H10.5 V17 H6.5 V10.5 H0 V6.5 H6.5 Z" fill="#c6cbcf" /></svg>
            </div>
        </div>
    );
}

/* ---------- page ---------- */

export default function App() {
    return (
        <div className="w-[2880px] h-[1638px] flex overflow-hidden bg-[#3f474e] font-['DejaVu_Sans_Condensed','DejaVu_Sans',sans-serif] [font-stretch:condensed]">
            <div className="w-[16px] shrink-0 flex items-center border-r-2 border-[#323a40] bg-[#434b52]">
                <div className="ml-[6px] flex flex-col gap-[4px]">
                    {[0, 1, 2, 3, 4].map((i) => (
                        <div key={i} className="w-[4px] h-[4px] bg-[#2d343a]" />
                    ))}
                </div>
            </div>
            <div className="flex-1 flex flex-col">
                <div className="h-[60px] shrink-0 flex items-center border-t-2 border-[#50585f]">
                    <ToolIcons />
                    <span className="ml-[13px] text-[24px] text-[#e6e9eb] tracking-[-0.8px] whitespace-nowrap">Playlist - Arrangement</span>
                    <svg width="9" height="15" viewBox="0 0 9 15" className="ml-[33px]"><path d="M0 0 L9 7.5 L0 15 Z" fill="#aeb4b9" /></svg>
                    <span className="ml-[44px] text-[24px] text-[#e6e9eb] tracking-[1.4px]">Decay</span>
                    <svg width="9" height="15" viewBox="0 0 9 15" className="ml-[10px]"><path d="M0 0 L9 7.5 L0 15 Z" fill="#aeb4b9" /></svg>
                    <div className="ml-auto flex items-center mr-[20px]">
                        <div className="w-[14px] h-[4px] mb-[12px] bg-[#e4e7e9]" />
                        <div className="ml-[22px] w-[18px] h-[14px] border-2 border-t-4 border-[#e4e7e9]" />
                        <svg width="18" height="18" viewBox="0 0 18 18" className="ml-[20px]" fill="none" stroke="#e4e7e9" strokeWidth="2.4">
                            <path d="M1 1 L17 17 M17 1 L1 17" />
                        </svg>
                    </div>
                </div>
                <div className="flex-1 flex min-h-0">
                    <Picker />
                    <div className="w-[13px] shrink-0" />
                    <div className="w-[2533px] shrink-0 flex flex-col">
                        <div className="h-[78px] shrink-0 flex">
                            <ToolBox />
                            <div className="w-[2271px] shrink-0 flex flex-col bg-[#333c44]">
                                <div className="h-[38px] flex">
                                    <ArrowBtn dir="left" />
                                    <div className="ml-[2px]"><Overview /></div>
                                    <div className="ml-auto"><ArrowBtn dir="right" /></div>
                                </div>
                                <div className="h-[2px] bg-[#333c44]" />
                                <div className="flex">
                                    <Ruler />
                                    <div className="w-[24px] h-[38px] bg-[#2b3c47]" />
                                </div>
                            </div>
                            <div className="w-[40px] shrink-0 flex flex-col items-end gap-[2px]">
                                <SideBtn>
                                    <div className="w-[4px] h-[6px] bg-[#1c2227]" />
                                </SideBtn>
                                <SideBtn>
                                    <svg width="18" height="10" viewBox="0 0 18 10" fill="none" stroke="#1c2227" strokeWidth="2"><path d="M1 9 L9 1 L17 9" /></svg>
                                </SideBtn>
                            </div>
                        </div>
                        <div className="h-[1486px] shrink-0 flex overflow-hidden bg-[#333c44] border-t-2 border-[#242b31] border-b-2">
                            <div className="w-[2493px] shrink-0 flex flex-col overflow-hidden">
                                {ROWS.map((r) => (
                                    <PlaylistRow key={r.name} row={r} />
                                ))}
                            </div>
                            <div className={`w-[40px] shrink-0 flex flex-col items-end ${HATCH}`}>
                                <SideBtn h={65} />
                                <div className="flex-1" />
                                <SideBtn>
                                    <svg width="18" height="10" viewBox="0 0 18 10" fill="none" stroke="#1c2227" strokeWidth="2"><path d="M1 1 L9 9 L17 1" /></svg>
                                </SideBtn>
                            </div>
                        </div>
                    </div>
                </div>
            </div>
        </div>
    );
}
